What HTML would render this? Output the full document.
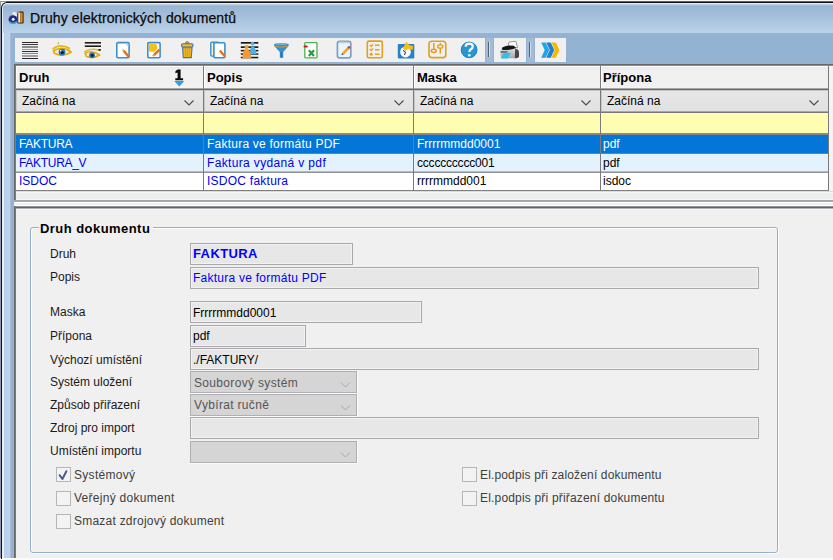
<!DOCTYPE html>
<html><head><meta charset="utf-8">
<style>
*{margin:0;padding:0;box-sizing:border-box}
html,body{width:833px;height:560px;overflow:hidden;background:#f0f0f0;font-family:"Liberation Sans",sans-serif;font-size:12px;color:#000}
.a{position:absolute}
.t{position:absolute;white-space:nowrap;line-height:14px;font-size:12px}
.b{font-weight:bold}
.fld{background:#e7e7e7;border:1px solid #a9a9ad;box-shadow:inset 0 0 0 1px #f2f2f2}
.cmb{background:#d5d5d5;border:1px solid #b0b0b4;box-shadow:0 1px 0 #fafafa,1px 0 0 #fafafa}
.chk{width:15px;height:15px;border:1px solid #b6b6b6;background:#f3f3f3}
.lb{color:#1a1a1a}
.cb{color:#404040}
</style></head><body>
<div class="a" style="left:0;top:0;width:833px;height:560px;background:#f0f0f0;overflow:hidden">

<!-- outer -->
<div class="a" style="left:0;top:0;width:833px;height:1px;background:#fafafa"></div>
<div class="a" style="left:6px;top:1px;width:827px;height:1px;background:#5a6470"></div>
<div class="a" style="left:0;top:1px;width:6px;height:1px;background:#969696"></div>
<div class="a" style="left:0;top:1px;width:1px;height:559px;background:#8e98a8"></div>
<!-- window frame -->
<div class="a" style="left:1px;top:2px;width:840px;height:557px;background:#121212;border-radius:6px 0 0 0"></div>
<div class="a" style="left:2px;top:3px;width:840px;height:555px;background:#e4eef8;border-radius:5px 0 0 0"></div>
<div class="a" style="left:3px;top:4px;width:840px;height:554px;background:linear-gradient(#c4d8ec 0px,#9ab6d3 2px,#a4bfdb 12px,#b9d2ea 28px,#bad2ea 29px);border-radius:4px 0 0 0"></div>
<div class="a" style="left:3px;top:33px;width:7px;height:525px;background:linear-gradient(90deg,#e6f2fc 0,#e6f2fc 1px,#b9d0e8 1px,#bcd4ec 7px)"></div>
<!-- client area -->
<div class="a" style="left:10px;top:33px;width:823px;height:525px;background:#94b2d2"></div>
<div class="a" style="left:10px;top:33px;width:1px;height:525px;background:#a8bcd8"></div>
<div class="a" style="left:0;top:558px;width:833px;height:2px;background:#fafbfc"></div>
<div class="a" style="left:1px;top:8px;width:1px;height:551px;background:#121212"></div>

<!-- title -->
<div class="t" style="left:30px;top:10px;font-size:14px;line-height:16px;color:#0a0a0a;letter-spacing:0.1px;-webkit-text-stroke:0.25px #0a0a0a">Druhy elektronických dokumentů</div>

<!-- toolbar -->
<div id="tb" class="a" style="left:15px;top:38px;width:470px;height:24px;background:#f0f0f0"></div>
<div class="a" style="left:494px;top:38px;width:32px;height:24px;background:#f0f0f0"></div>
<div class="a" style="left:535px;top:38px;width:31px;height:24px;background:#f0f0f0"></div>
<div class="a" style="left:486px;top:38px;width:7px;height:24px;background:#a2bcd8"></div>
<div class="a" style="left:527px;top:38px;width:7px;height:24px;background:#a2bcd8"></div>
<div class="a" style="left:488px;top:42px;width:2px;height:15px;background:linear-gradient(90deg,#56606c 0,#56606c 1px,#d4e0ec 1px)"></div>
<div class="a" style="left:529px;top:42px;width:2px;height:15px;background:linear-gradient(90deg,#56606c 0,#56606c 1px,#d4e0ec 1px)"></div>


<!-- icons -->
<svg class="a" style="left:0;top:0" width="833" height="64" viewBox="0 0 833 64">
<!-- title icon -->
<path d="M12.5 12.2 Q15 11.5 16.8 13 L16.8 16 L13 16.2Z" fill="#f4f6f8" opacity="0.85"/>
<rect x="17.3" y="11.6" width="6.3" height="12" rx="0.8" fill="#2a2018"/>
<rect x="18.3" y="12.6" width="1.9" height="10" fill="#f4f4f0"/>
<rect x="20.3" y="12.6" width="2.3" height="10" fill="#f08818"/>
<circle cx="18.2" cy="12.2" r="1.2" fill="#c89058"/>
<circle cx="13" cy="19.6" r="4.4" fill="#1c2c84"/>
<path d="M9.4 21.5 Q12.5 25.2 16.8 21.6" stroke="#40a8d8" stroke-width="1.5" fill="none"/>
<path d="M9 18.5 Q9.5 16.5 11 15.8" stroke="#8040a0" stroke-width="0.9" fill="none"/>
<circle cx="13.2" cy="19.3" r="1.5" fill="#eef0e0"/>

<!-- 1 lines -->
<rect x="22" y="42" width="16" height="1" fill="#2a2a2a"/>
<rect x="22" y="44" width="16" height="1" fill="#383838"/>
<rect x="22" y="46" width="16" height="2" fill="#8c8c8c"/>
<rect x="22" y="49" width="16" height="1" fill="#9a9a9a"/>
<rect x="22" y="51" width="16" height="1" fill="#2e2e2e"/>
<rect x="22" y="53" width="16" height="1" fill="#8a8a8a"/>
<rect x="22" y="55" width="16" height="2" fill="#a0a0a0"/>
<rect x="22" y="58" width="16" height="1" fill="#2a2a2a"/>

<!-- 2 eye -->
<path d="M53.5 51 Q62 45.5 71 52 Q63 57.8 54.5 53.2Z" fill="#f2eee0" stroke="#e2aa10" stroke-width="1.7"/>
<path d="M52.6 49.2 Q60 42.8 70 48.6" stroke="#e8b618" stroke-width="1.8" fill="none"/>
<circle cx="62" cy="52.2" r="3.4" fill="#2a7ab8"/>
<circle cx="62.3" cy="52.5" r="1.6" fill="#081828"/>
<circle cx="60.8" cy="50.8" r="0.8" fill="#fff"/>
<path d="M58 44.5 L58.6 42" stroke="#c8a040" stroke-width="0.8"/>

<!-- 3 eye2 -->
<rect x="84.8" y="42" width="16.2" height="1.6" fill="#1c1c1c"/>
<rect x="84.8" y="45.4" width="16.2" height="1.6" fill="#1c1c1c"/>
<rect x="98" y="49" width="3" height="1.8" rx="0.8" fill="#1c1c1c"/>
<path d="M85 53.2 Q92 49.5 99.5 55 Q93 59.2 86.5 56.5Z" fill="#f2eee0" stroke="#e2aa10" stroke-width="1.6"/>
<path d="M84.5 51.8 Q91.5 47.5 98.5 50.3" stroke="#e8b618" stroke-width="1.6" fill="none"/>
<circle cx="92" cy="55.3" r="3" fill="#2a7ab8"/>
<circle cx="92.3" cy="55.5" r="1.4" fill="#081828"/>

<!-- 4 doc new -->
<rect x="116.8" y="42.6" width="12.3" height="15.2" rx="1.2" fill="#fff" stroke="#3a8fd0" stroke-width="1.6"/>
<path d="M125.2 43.4 L128.3 46.5 L128.3 43.4Z" fill="#a8d0ee"/>
<path d="M123.6 50.6 L129 57" stroke="#e8701c" stroke-width="2.5"/>
<path d="M122.6 49.4 L123.9 50.9" stroke="#e0c090" stroke-width="2"/>

<!-- 5 doc edit -->
<rect x="147.8" y="42.6" width="12.3" height="15.2" rx="1.2" fill="#fff" stroke="#3a8fd0" stroke-width="1.6"/>
<path d="M149 44 L156 44 Q157.5 46 157.3 48.5 L154 52 L149 51.5Z" fill="#f8c010"/>
<path d="M159.6 49.6 L154 55" stroke="#e8701c" stroke-width="2.5"/>
<path d="M154.3 54.7 L152.8 56.2" stroke="#c8a070" stroke-width="1.8"/>

<!-- 6 trash -->
<rect x="185.7" y="41.8" width="3" height="2.2" rx="0.8" fill="#f0b820" stroke="#4a72a8" stroke-width="0.9"/>
<rect x="181.6" y="43.8" width="11.3" height="3.2" rx="1" fill="#f4bc18" stroke="#4a72a8" stroke-width="1.1"/>
<path d="M182.6 47.8 L192 47.8 L191.3 57.6 L183.3 57.6Z" fill="#f0b820" stroke="#4a72a8" stroke-width="1.1"/>
<path d="M185.4 49 V56.5 M187.3 49 V56.5 M189.2 49 V56.5" stroke="#d49a10" stroke-width="0.8"/>

<!-- 7 copy doc -->
<rect x="210.8" y="42.3" width="8" height="13.8" rx="1" fill="#f4f0d8" stroke="#3a8fd0" stroke-width="1.4"/>
<rect x="213.9" y="42.7" width="11" height="15" rx="1" fill="#fff" stroke="#3a8fd0" stroke-width="1.6"/>
<path d="M219.8 50.6 L225 56.6" stroke="#e8701c" stroke-width="2.3"/>

<!-- 8 sort -->
<rect x="240.8" y="42" width="17.5" height="1.7" fill="#1a1a1a"/>
<rect x="240.8" y="46.3" width="17.5" height="1.7" fill="#1a1a1a"/>
<rect x="240.8" y="49.9" width="17.5" height="1.5" fill="#1a1a1a"/>
<rect x="240.8" y="53.3" width="17.5" height="1.5" fill="#1a1a1a"/>
<rect x="240.8" y="56.8" width="17.5" height="1.5" fill="#1a1a1a"/>
<circle cx="252.6" cy="43.6" r="1.9" fill="#50b0e8"/>
<path d="M249.7 54.6 L256.6 54.6 Q256.5 50 254 46.5 L251.2 46.5 Q249.5 50 249.7 54.6Z" fill="#50b0e8"/>
<circle cx="246.6" cy="47" r="2.1" fill="#f59a30"/>
<path d="M242.4 58.3 L251.2 58.3 Q251 52.5 248.3 49.3 L244.9 49.3 Q242.4 52.5 242.4 58.3Z" fill="#f59a30"/>

<!-- 9 funnel -->
<path d="M274 44 Q281.4 41.8 288.8 44 L288.2 46.6 L283.2 52 L283.2 57.8 L279.8 57.8 L279.8 52 L274.6 46.6Z" fill="#3a8ed0"/>
<path d="M275 44.2 Q281.4 42.5 287.8 44.2 Q281.4 45.5 275 44.2Z" fill="#7cc0ec"/>
<path d="M274.6 46.3 Q281.4 47.6 288.2 46.3" stroke="#d89838" stroke-width="1.1" fill="none"/>
<path d="M281.5 52 L281.5 57.5" stroke="#2470b0" stroke-width="1.5"/>

<!-- 10 excel -->
<rect x="304.8" y="42.6" width="12.2" height="15.2" rx="0.8" fill="#fff" stroke="#50b050" stroke-width="1.3"/>
<rect x="303.5" y="45.4" width="4.3" height="2.1" rx="1" fill="#d01818"/>
<path d="M308.8 50.2 L314 56 M314 50.2 L308.8 56" stroke="#2a9a3a" stroke-width="2.1"/>

<!-- 11 notepad -->
<rect x="337.4" y="41.3" width="13.4" height="16.6" rx="2.2" fill="#eaf4fc" stroke="#7aa0c8" stroke-width="1.7"/>
<path d="M339 42.5 H349" stroke="#d8c890" stroke-width="1.8" stroke-dasharray="1.2 0.8"/>
<path d="M342.8 53.8 L348.8 47.6" stroke="#f4a020" stroke-width="2.6"/>
<path d="M348.3 48.1 L349.8 46.6" stroke="#d03818" stroke-width="2.4"/>
<path d="M342.9 53.7 L341.9 54.7" stroke="#404040" stroke-width="1.6"/>

<!-- 12 checklist -->
<rect x="367.3" y="41.1" width="15" height="16.6" rx="1.5" fill="none" stroke="#e0a020" stroke-width="1.6"/>
<path d="M369.9 45 L371.2 46.5 L373.3 44.4 M369.9 49 L371.2 50.5 L373.3 48.4" stroke="#e0a020" stroke-width="1.3" fill="none"/>
<circle cx="371.2" cy="54.3" r="1.5" fill="#e0a020"/>
<path d="M375 45.3 H379.5 M375 49.8 H379.5 M375 54.3 H379.5" stroke="#e0a020" stroke-width="1.6"/>

<!-- 13 clock -->
<rect x="397.8" y="44" width="16.5" height="14.5" rx="1" fill="#2a80c0"/>
<circle cx="405.5" cy="52" r="5.4" fill="#f6f8fc"/>
<path d="M405.5 52 L403 50.5 M405.5 52 L404.5 55" stroke="#203050" stroke-width="1"/>
<path d="M403 48.5 L406.4 41.5 L409 45 L413.2 46 L412.6 50 L408.3 48.8 L405.5 51Z" fill="#f4c018"/>

<!-- 14 sliders -->
<rect x="429" y="41.3" width="16.8" height="16.3" rx="2.8" fill="none" stroke="#e0a020" stroke-width="1.6"/>
<path d="M433.8 43 V53.5 M440.3 43 V53.5" stroke="#e0a020" stroke-width="1.5"/>
<ellipse cx="433.8" cy="50.8" rx="2.6" ry="1.6" fill="#f8f0d8" stroke="#e0a020" stroke-width="1.4"/>
<ellipse cx="440.3" cy="46.5" rx="2.6" ry="1.6" fill="#f8f0d8" stroke="#e0a020" stroke-width="1.4"/>

<!-- 15 help -->
<circle cx="469.1" cy="49.9" r="8.2" fill="#2896d4"/>
<circle cx="469.1" cy="49.9" r="7.8" fill="none" stroke="#2080c0" stroke-width="0.8"/>
<path d="M465.6 46.6 Q465.8 43.6 469.3 43.6 Q472.8 43.6 472.8 46.5 Q472.8 48.4 470.6 49.5 Q469.4 50.2 469.4 52" stroke="#fff" stroke-width="2.2" fill="none"/>
<circle cx="469.3" cy="55.3" r="1.3" fill="#fff"/>

<!-- 16 printer -->
<defs><linearGradient id="pg" x1="0" y1="0" x2="0" y2="1"><stop offset="0" stop-color="#e0e0e0"/><stop offset="1" stop-color="#a8a8a8"/></linearGradient></defs>
<path d="M508.8 42.2 L515.8 41.2 L517.6 47.6 L508.2 48.2Z" fill="#fbfbfb" stroke="#8c8c8c" stroke-width="0.9"/>
<path d="M500.5 51.5 Q500.3 48.6 503.2 48.4 L516 48.4 Q519 48.8 519 52 L519 56 Q518.6 58.2 516 58.2 L503 58.2 Q500.5 58 500.5 55.5Z" fill="url(#pg)"/>
<path d="M515.2 48.8 Q519 49.6 519 52.6 L519 56.4 Q518.4 58.2 516 58.2 L514.8 58.2Z" fill="#484848"/>
<path d="M501.8 48 Q505.5 44.6 513.8 45.8 L516.2 48 Q510 50.6 502.4 50Z" fill="#161616"/>
<path d="M500.6 51.2 L508 51.2 L507 52.6 L500.6 52.8Z" fill="#505050"/>
<path d="M503.6 53 L510.8 52.6 L508 58.4 L500.6 58.4Z" fill="#30c0f0"/>

<!-- 17 arrows -->
<path d="M541.2 42.5 L545.7 42.5 L549.2 50.1 L545.7 57.8 L541.2 57.8 L544.7 50.1Z" fill="#20a6e6"/>
<path d="M546.3 42.5 L550.8 42.5 L554.3 50.1 L550.8 57.8 L546.3 57.8 L549.8 50.1Z" fill="#2080cc"/>
<path d="M551.4 42.5 L555.9 42.5 L559.4 50.1 L555.9 57.8 L551.4 57.8 L554.9 50.1Z" fill="#f6b800"/>
</svg>

<!-- grid -->
<div class="a" style="left:14px;top:64px;width:819px;height:137px;background:#f0f0f0"></div>
<div class="a" style="left:14px;top:64px;width:819px;height:1px;background:#686868"></div>
<div class="a" style="left:14px;top:65px;width:819px;height:1px;background:#8c8c8c"></div>
<div class="a" style="left:14px;top:64px;width:1px;height:137px;background:#686868"></div>
<div class="a" style="left:15px;top:65px;width:1px;height:136px;background:#7c7c7c"></div>
<!-- header row -->
<div class="a" style="left:16px;top:66px;width:817px;height:1px;background:#ffffff"></div>
<div class="a" style="left:16px;top:67px;width:817px;height:21px;background:linear-gradient(#eaeaea,#f0f0f0 4px,#f2f2f2 19px,#f4f4f4)"></div>
<div class="a" style="left:16px;top:88px;width:817px;height:1px;background:#a8a8a8"></div>
<div class="a" style="left:16px;top:89px;width:817px;height:1px;background:#666666"></div>
<!-- filter row -->
<div class="a" style="left:16px;top:90px;width:817px;height:21px;background:linear-gradient(#c8c8c8 0,#c8c8c8 1px,#e6e6e6 1px,#e2e2e2)"></div>
<div class="a" style="left:16px;top:111px;width:817px;height:1px;background:#a8a8a8"></div>
<div class="a" style="left:16px;top:112px;width:817px;height:1px;background:#787878"></div>
<!-- yellow row -->
<div class="a" style="left:16px;top:113px;width:813px;height:20px;background:#fffdb2"></div>
<div class="a" style="left:16px;top:133px;width:817px;height:1px;background:#8c8c84"></div>
<div class="a" style="left:16px;top:134px;width:817px;height:1px;background:#86868e"></div>
<!-- data rows -->
<div class="a" style="left:16px;top:135px;width:813px;height:18px;background:#0476d8"></div>
<div class="a" style="left:16px;top:153px;width:813px;height:1px;background:#807c7a"></div>
<div class="a" style="left:16px;top:154px;width:813px;height:17px;background:#e3f2fd"></div>
<div class="a" style="left:16px;top:171px;width:813px;height:1px;background:#b4bcc0"></div>
<div class="a" style="left:16px;top:172px;width:813px;height:1px;background:#949498"></div>
<div class="a" style="left:16px;top:173px;width:813px;height:17px;background:#ffffff"></div>
<div class="a" style="left:16px;top:190px;width:813px;height:1px;background:#808080"></div>
<div class="a" style="left:16px;top:191px;width:817px;height:1px;background:#dcdcdc"></div>
<div class="a" style="left:16px;top:192px;width:817px;height:1px;background:#f6f6f6"></div>
<div class="a" style="left:16px;top:193px;width:817px;height:6px;background:#eeeeee"></div>
<div class="a" style="left:16px;top:199px;width:817px;height:1px;background:#f8f8f8"></div>
<!-- column dividers -->
<div class="a" style="left:203px;top:66px;width:1px;height:125px;background:#7a7a7a"></div>
<div class="a" style="left:413px;top:66px;width:1px;height:125px;background:#7a7a7a"></div>
<div class="a" style="left:600px;top:66px;width:1px;height:125px;background:#7a7a7a"></div>
<div class="a" style="left:828px;top:66px;width:1px;height:125px;background:#7a7a7a"></div>
<div class="a" style="left:16px;top:67px;width:1px;height:21px;background:#fff"></div>
<div class="a" style="left:204px;top:67px;width:1px;height:21px;background:#fff"></div>
<div class="a" style="left:414px;top:67px;width:1px;height:21px;background:#fff"></div>
<div class="a" style="left:601px;top:67px;width:1px;height:21px;background:#fff"></div>
<div class="a" style="left:16px;top:91px;width:1px;height:20px;background:#c8c8c8"></div>
<div class="a" style="left:204px;top:91px;width:1px;height:20px;background:#c8c8c8"></div>
<div class="a" style="left:414px;top:91px;width:1px;height:20px;background:#c8c8c8"></div>
<div class="a" style="left:601px;top:91px;width:1px;height:20px;background:#c8c8c8"></div>
<div class="a" style="left:829px;top:66px;width:4px;height:125px;background:#f4f4f4"></div>
<div class="a" style="left:14px;top:200px;width:819px;height:2px;background:#a4a8ac"></div>

<!-- header text -->
<div class="t b" style="left:19px;top:71px;font-size:13px">Druh</div>
<div class="t b" style="left:207px;top:71px;font-size:13px">Popis</div>
<div class="t b" style="left:417px;top:71px;font-size:13px">Maska</div>
<div class="t b" style="left:603px;top:71px;font-size:13px">Přípona</div>
<svg class="a" style="left:170px;top:66px" width="20" height="24"><path d="M7.6 3.5 H10.6 V12.3 H13.1 V14.3 H5.3 V12.3 H7.6 V6.6 L5.4 7.2 V5.3Z" fill="#0c0c0c"/></svg>
<svg class="a" style="left:0;top:0" width="833" height="120">
<path d="M174.3 81 L184.3 81 L179.3 86.6Z" fill="#2aa2e2"/>
<path d="M184.5 100.5 L189 105 L193.5 100.5" stroke="#4a4a4a" stroke-width="1.1" fill="none"/>
<path d="M394.5 100.5 L399 105 L403.5 100.5" stroke="#4a4a4a" stroke-width="1.1" fill="none"/>
<path d="M581.5 100.5 L586 105 L590.5 100.5" stroke="#4a4a4a" stroke-width="1.1" fill="none"/>
<path d="M809.5 100.5 L814 105 L818.5 100.5" stroke="#4a4a4a" stroke-width="1.1" fill="none"/>
</svg>

<!-- filter text -->
<div class="t" style="left:22px;top:94px">Začíná na</div>
<div class="t" style="left:210px;top:94px">Začíná na</div>
<div class="t" style="left:420px;top:94px">Začíná na</div>
<div class="t" style="left:607px;top:94px">Začíná na</div>

<!-- data text -->
<div class="t" style="left:19px;top:137px;color:#fff;letter-spacing:-0.3px">FAKTURA</div>
<div class="t" style="left:207px;top:137px;color:#fff;letter-spacing:0.23px">Faktura ve formátu PDF</div>
<div class="t" style="left:417px;top:137px;color:#fff">Frrrrmmdd0001</div>
<div class="t" style="left:603px;top:137px;color:#fff">pdf</div>
<div class="t" style="left:19px;top:156px;color:#0000f0;letter-spacing:-0.3px">FAKTURA_V</div>
<div class="t" style="left:207px;top:156px;color:#0000f0;letter-spacing:0.35px">Faktura vydaná v pdf</div>
<div class="t" style="left:417px;top:156px;letter-spacing:-0.2px">cccccccccc001</div>
<div class="t" style="left:603px;top:156px">pdf</div>
<div class="t" style="left:19px;top:174px;color:#0000f0">ISDOC</div>
<div class="t" style="left:207px;top:174px;color:#0000f0;letter-spacing:0.25px">ISDOC faktura</div>
<div class="t" style="left:417px;top:174px">rrrrmmdd001</div>
<div class="t" style="left:603px;top:174px">isdoc</div>

<!-- splitter -->
<div class="a" style="left:14px;top:202px;width:819px;height:4px;background:#f0f0f0"></div>
<div class="a" style="left:14px;top:202px;width:819px;height:1px;background:#ffffff"></div>
<div class="a" style="left:14px;top:205px;width:819px;height:1px;background:#ffffff"></div>
<div class="a" style="left:14px;top:206px;width:819px;height:1px;background:#909498"></div>
<div class="a" style="left:14px;top:207px;width:819px;height:1px;background:#606468"></div>
<div class="a" style="left:14px;top:208px;width:819px;height:1px;background:#b0b4b8"></div>
<div class="a" style="left:14px;top:206px;width:1px;height:352px;background:#686868"></div>
<div class="a" style="left:15px;top:206px;width:1px;height:352px;background:#7a7a7a"></div>
<div class="a" style="left:16px;top:209px;width:817px;height:349px;background:#f0f0f0"></div>
<div class="a" style="left:16px;top:209px;width:817px;height:1px;background:#f8f8fa"></div>

<!-- groupbox -->
<div class="a" style="left:31px;top:228px;width:748px;height:326px;border:1px solid #ffffff;border-radius:3px"></div>
<div class="a" style="left:30px;top:227px;width:748px;height:326px;border:1px solid #92b0d0;border-radius:3px"></div>
<div class="a" style="left:39px;top:220px;width:114px;height:14px;background:#f0f0f0"></div>
<div class="t b" style="left:40px;top:222px;font-size:13px;letter-spacing:0.45px">Druh dokumentu</div>

<!-- labels -->
<div class="t lb" style="left:50px;top:247px">Druh</div>
<div class="t lb" style="left:50px;top:270px">Popis</div>
<div class="t lb" style="left:50px;top:305px">Maska</div>
<div class="t lb" style="left:50px;top:329px">Přípona</div>
<div class="t lb" style="left:50px;top:353px">Výchozí umístění</div>
<div class="t lb" style="left:50px;top:375px">Systém uložení</div>
<div class="t lb" style="left:50px;top:398px">Způsob přiřazení</div>
<div class="t lb" style="left:50px;top:421px">Zdroj pro import</div>
<div class="t lb" style="left:50px;top:444px">Umístění importu</div>

<!-- fields -->
<div class="a fld" style="left:190px;top:243px;width:163px;height:22px"></div>
<div class="a fld" style="left:190px;top:267px;width:569px;height:22px"></div>
<div class="a fld" style="left:190px;top:301px;width:232px;height:22px"></div>
<div class="a fld" style="left:190px;top:325px;width:116px;height:22px"></div>
<div class="a fld" style="left:190px;top:348px;width:569px;height:22px"></div>
<div class="a cmb" style="left:190px;top:371px;width:167px;height:22px"></div>
<div class="a cmb" style="left:190px;top:394px;width:167px;height:22px"></div>
<div class="a fld" style="left:190px;top:417px;width:569px;height:22px"></div>
<div class="a cmb" style="left:190px;top:441px;width:167px;height:22px"></div>
<svg class="a" style="left:0;top:360px" width="400" height="110">
<path d="M341 22.5 L345.5 27 L350 22.5" stroke="#a8a8a8" stroke-width="1" fill="none"/>
<path d="M341 45.5 L345.5 50 L350 45.5" stroke="#a8a8a8" stroke-width="1" fill="none"/>
<path d="M341 92.5 L345.5 97 L350 92.5" stroke="#a8a8a8" stroke-width="1" fill="none"/>
</svg>

<div class="t b" style="left:193px;top:247px;color:#0000ff;font-size:13px;letter-spacing:0.4px">FAKTURA</div>
<div class="t" style="left:193px;top:271px;color:#0000ff;letter-spacing:0.25px">Faktura ve formátu PDF</div>
<div class="t" style="left:193px;top:306px">Frrrrmmdd0001</div>
<div class="t" style="left:193px;top:329px">pdf</div>
<div class="t" style="left:193px;top:353px">./FAKTURY/</div>
<div class="t" style="left:194px;top:376px;color:#555555;letter-spacing:0.33px">Souborový systém</div>
<div class="t" style="left:194px;top:398px;color:#555555;letter-spacing:0.33px">Vybírat ručně</div>

<!-- checkboxes -->
<div class="a chk" style="left:56px;top:467px"></div>
<div class="a chk" style="left:56px;top:491px"></div>
<div class="a chk" style="left:56px;top:514px"></div>
<div class="a chk" style="left:462px;top:467px"></div>
<div class="a chk" style="left:462px;top:491px"></div>
<svg class="a" style="left:56px;top:467px" width="15" height="15"><path d="M3.6 8.2 L6.4 12 L10.4 4.2" stroke="#4a5a98" stroke-width="2" stroke-linecap="round" stroke-linejoin="round" fill="none"/></svg>
<div class="t cb" style="left:74px;top:468px;letter-spacing:0.3px">Systémový</div>
<div class="t cb" style="left:74px;top:491px;letter-spacing:0.28px">Veřejný dokument</div>
<div class="t cb" style="left:74px;top:514px;letter-spacing:0.23px">Smazat zdrojový dokument</div>
<div class="t cb" style="left:480px;top:468px;letter-spacing:0.15px">El.podpis při založení dokumentu</div>
<div class="t cb" style="left:480px;top:491px;letter-spacing:0.18px">El.podpis při přiřazení dokumentu</div>
</div>
</body></html>
